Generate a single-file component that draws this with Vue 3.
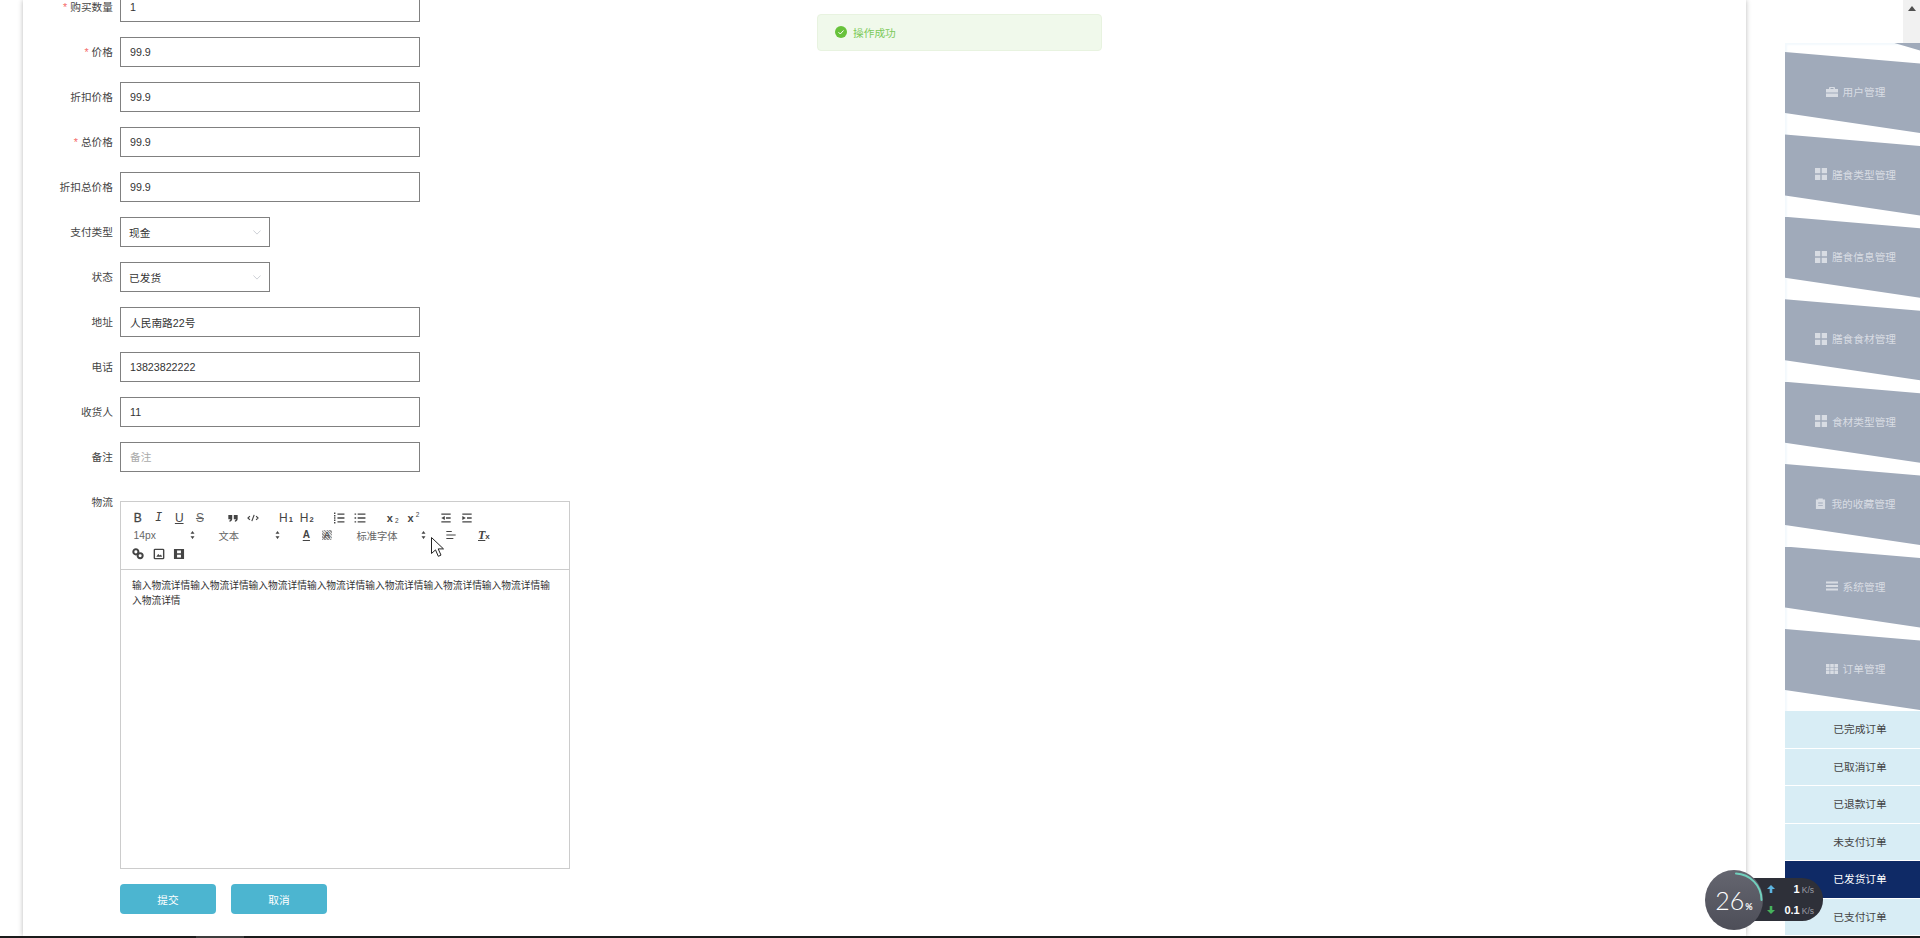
<script setup>
const fields = [
  { label: '购买数量', req: true, value: '1' },
  { label: '价格', req: true, value: '99.9' },
  { label: '折扣价格', value: '99.9' },
  { label: '总价格', req: true, value: '99.9' },
  { label: '折扣总价格', value: '99.9' },
  { label: '支付类型', value: '现金', select: true },
  { label: '状态', value: '已发货', select: true },
  { label: '地址', value: '人民南路22号' },
  { label: '电话', value: '13823822222' },
  { label: '收货人', value: '11' },
  { label: '备注', placeholder: '备注' },
]

const icons = {
  quote: '<g fill="currentColor" stroke="none"><path d="M3 5h5v5c0 2.200-1.400 3.600-3.600 3.800v-1.600c.8-.2 1.300-.8 1.400-1.700H3z"/><path d="M10 5h5v5c0 2.200-1.400 3.600-3.600 3.800v-1.600c.8-.2 1.300-.8 1.400-1.700H10z"/></g>',
  code: '<path d="M5 6.500 2.500 9 5 11.500M13 6.500 15.500 9 13 11.500M10.500 5 7.500 13"/>',
  ol: '<path d="M7 4h9M7 9h9M7 14h9" stroke-width="1.800"/><path d="M3.500 2v14" stroke-width="1.800" stroke-dasharray="2 1"/>',
  ul: '<path d="M6 4h10M6 9h10M6 14h10M2 4h2M2 9h2M2 14h2" stroke-width="1.800"/>',
  outdent: '<path d="M3 4h12M9 9h6M3 14h12" stroke-width="1.800"/><path d="M7.500 6.500v5L3 9z" fill="currentColor" stroke="none"/>',
  indent: '<path d="M3 4h12M9 9h6M3 14h12" stroke-width="1.800"/><path d="M3 6.500v5L7.500 9z" fill="currentColor" stroke="none"/>',
  align: '<path d="M3 4.500h7M3 9h12M3 13.500h9" stroke-width="1.600"/>',
  link: '<g stroke-width="2.600"><rect x="3" y="3" width="6.500" height="6.500" rx="3.200"/><rect x="8.500" y="8" width="6.500" height="6.500" rx="3.200"/></g>',
  image: '<rect x="3" y="3" width="12" height="12" rx="1" stroke-width="1.800"/><path d="M5.500 12.500 8 9l2 2 1.500-1.500 1.500 3z" fill="currentColor" stroke="none"/>',
  video: '<path d="M3 2.500h12a.5.5 0 0 1 .5.5v12a.5.5 0 0 1-.5.5H3a.5.5 0 0 1-.5-.5V3a.5.5 0 0 1 .5-.5zM6.500 4.500v3.500h5V4.500zm0 5.500v3.500h5V10z" fill="currentColor" fill-rule="evenodd" stroke="none"/>',
}

const groups1 = [
  [{ text: 'B', cls: 'bold' }, { text: 'I', cls: 'ital' }, { text: 'U', cls: 'under' }, { text: 'S', cls: 'strike' }],
  [{ icon: 'quote' }, { icon: 'code' }],
  [{ text: 'H', sub: '1', cls: 'head' }, { text: 'H', sub: '2', cls: 'head' }],
  [{ icon: 'ol' }, { icon: 'ul' }],
  [{ text: 'x', sub: '2', cls: 'script' }, { text: 'x', sup: '2', cls: 'script' }],
  [{ icon: 'outdent' }, { icon: 'indent' }],
]

const navs = [
  { text: '', icon: 'none', clip: true },
  { text: '用户管理', icon: 'case' },
  { text: '膳食类型管理', icon: 'large' },
  { text: '膳食信息管理', icon: 'large' },
  { text: '膳食食材管理', icon: 'large' },
  { text: '食材类型管理', icon: 'large' },
  { text: '我的收藏管理', icon: 'clip' },
  { text: '系统管理', icon: 'bars' },
  { text: '订单管理', icon: 'grid' },
]
const subs = ['已完成订单', '已取消订单', '已退款订单', '未支付订单', '已发货订单', '已支付订单']
const memo = '输入物流详情'.repeat(8)
</script>

<template>
  <div class="page">
    <div class="body">
      <main class="card">
        <form class="form" @submit.prevent>
          <div v-for="f in fields" :key="f.label" class="row">
            <label class="label"><i v-if="f.req" class="req">*</i>{{ f.label }}</label>
            <div v-if="f.select" class="select">
              <span>{{ f.value }}</span>
              <svg class="chev" viewBox="0 0 10 6" width="8" height="5"><path d="M.5.5 5 5 9.500.5" fill="none" stroke="#c0c4cc" /></svg>
            </div>
            <input v-else class="input" :value="f.value" :placeholder="f.placeholder" />
          </div>

          <div class="row editor-row">
            <label class="label">物流</label>
            <div class="editor">
              <div class="toolbar">
                <div class="tool-row first">
                  <div v-for="(g, i) in groups1" :key="i" class="group">
                    <span v-for="(b, j) in g" :key="j" class="tbtn" :class="b.cls">
                      <svg v-if="b.icon" viewBox="0 0 18 18" width="14" height="14" fill="none" stroke="currentColor" stroke-width="1.500" v-html="icons[b.icon]"></svg>
                      <template v-else>{{ b.text }}<sub v-if="b.sub">{{ b.sub }}</sub><sup v-if="b.sup">{{ b.sup }}</sup></template>
                    </span>
                  </div>
                </div>
                <div class="tool-row">
                  <div class="picker size">14px<svg class="updown" viewBox="0 0 6 10" width="5" height="8"><path d="M3 0l2.500 3.500h-5zM3 10 .5 6.500h5z" fill="#444" /></svg></div>
                  <div class="picker type">文本<svg class="updown" viewBox="0 0 6 10" width="5" height="8"><path d="M3 0l2.500 3.500h-5zM3 10 .5 6.500h5z" fill="#444" /></svg></div>
                  <div class="group color">
                    <span class="tbtn swatch">A</span>
                    <span class="tbtn"><b class="hatch">A</b></span>
                  </div>
                  <div class="picker font">标准字体<svg class="updown" viewBox="0 0 6 10" width="5" height="8"><path d="M3 0l2.500 3.500h-5zM3 10 .5 6.500h5z" fill="#444" /></svg></div>
                  <div class="group align"><span class="tbtn"><svg viewBox="0 0 18 18" width="14" height="14" fill="none" stroke="currentColor" stroke-width="1.500" v-html="icons.align"></svg></span></div>
                  <div class="group clean"><span class="tbtn tx"><u>T</u><sub>x</sub></span></div>
                </div>
                <div class="tool-row last">
                  <div class="group">
                    <span v-for="n in ['link', 'image', 'video']" :key="n" class="tbtn">
                      <svg viewBox="0 0 18 18" width="14" height="14" fill="none" stroke="currentColor" stroke-width="1.500" v-html="icons[n]"></svg>
                    </span>
                  </div>
                </div>
              </div>
              <div class="content">{{ memo }}</div>
            </div>
          </div>

          <div class="actions">
            <button class="btn" type="button">提交</button>
            <button class="btn" type="button">取消</button>
          </div>
        </form>
      </main>

      <aside class="side">
        <div class="side-top">
          <div class="scroll">
            <svg viewBox="0 0 8 5" width="8" height="5"><path d="M4 0l4 5H0z" fill="#505050" /></svg>
          </div>
        </div>
        <nav class="nav">
          <div class="menu">
            <div v-for="(n, i) in navs" :key="i" class="menu-item" :class="{ ghost: n.clip }">
              <svg v-if="n.icon === 'case'" viewBox="0 0 12 12" width="12" height="12"><path d="M4 1h4a1 1 0 0 1 1 1v1h3v3.500H0V3h3V2a1 1 0 0 1 1-1zm.5 1v1h3V2zM0 7.500h12V11H0z" fill="currentColor" fill-rule="evenodd" /></svg>
              <svg v-else-if="n.icon === 'large'" viewBox="0 0 12 12" width="12" height="12"><path d="M0 0h5.300v5.300H0zM6.700 0H12v5.300H6.700zM0 6.700h5.300V12H0zM6.700 6.700H12V12H6.700z" fill="currentColor" /></svg>
              <svg v-else-if="n.icon === 'clip'" viewBox="0 0 12 12" width="11" height="13"><path d="M1 1.500h2.500V.5h5v1H11V12H1zM3.500 5v1h5V5zm0 2.500v1h5v-1z" fill="currentColor" fill-rule="evenodd" /></svg>
              <svg v-else-if="n.icon === 'bars'" viewBox="0 0 12 12" width="12" height="12"><path d="M0 1.500h12v2H0zM0 5h12v2H0zM0 8.500h12v2H0z" fill="currentColor" /></svg>
              <svg v-else-if="n.icon === 'grid'" viewBox="0 0 12 12" width="12" height="12"><path d="M0 1h3.500v3H0zM4.250 1h3.500v3h-3.500zM8.500 1H12v3H8.500zM0 4.500h3.500v3H0zM4.250 4.500h3.500v3h-3.500zM8.500 4.500H12v3H8.500zM0 8h3.500v3H0zM4.250 8h3.500v3h-3.500zM8.500 8H12v3H8.500z" fill="currentColor" /></svg>
              <span v-if="n.text">{{ n.text }}</span>
            </div>
          </div>
          <ul class="subs">
            <li v-for="s in subs" :key="s" :class="{ active: s === '已发货订单' }">{{ s }}</li>
          </ul>
        </nav>
      </aside>
    </div>
    <div class="taskbar"><span class="task"></span></div>

    <div class="toast">
      <svg viewBox="0 0 12 12" width="12" height="12"><circle cx="6" cy="6" r="6" fill="#67c23a" /><path d="M3.500 6.200 5.300 8l3.200-3.500" fill="none" stroke="#fff" stroke-width="1" /></svg>
      <span>操作成功</span>
    </div>

    <svg class="cursor" viewBox="0 0 13 20" width="13" height="20"><path d="M.5.5v16l4-3.600 2.800 6.400 2.700-1.200-2.800-6.200h5.300z" fill="#fff" stroke="#222" stroke-width="1" /></svg>

    <div class="meter">
      <div class="pill">
        <div class="rate"><svg viewBox="0 0 8 8" width="8" height="8"><path d="M4 0l4 4H5.300v4H2.700V4H0z" fill="#5db4e0" /></svg><b>1</b><small>K/s</small></div>
        <div class="rate"><svg viewBox="0 0 8 8" width="8" height="8"><path d="M4 8 0 4h2.700V0h2.600v4H8z" fill="#46b35c" /></svg><b>0.1</b><small>K/s</small></div>
      </div>
      <div class="dial">
        <svg class="arc" viewBox="0 0 60 60" width="60" height="60"><path d="M31 3.500A26.500 26.500 0 0 1 56.500 30" fill="none" stroke="#70d0bd" stroke-width="2" stroke-linecap="round" /></svg>
        <span class="num">26</span><span class="pct">%</span>
      </div>
    </div>
  </div>
</template>

<style>
html, body { margin: 0; background: #fff; overflow: hidden; }
</style>

<style scoped>
.page {
  height: 938px;
  display: flex;
  flex-direction: column;
  overflow: hidden;
  position: relative;
  background: #fff;
  font-family: "Liberation Sans", "Noto Sans CJK SC", sans-serif;
  font-size: 10.7px;
  color: #444;
}
.body { flex: 1; min-height: 0; display: flex; }
.card {
  width: 1723px;
  margin-left: 23px;
  flex: none;
  overflow: hidden;
  background: #fff;
  box-shadow: 0 0 5px rgba(0, 0, 0, .28);
}
.form { margin-top: -8px; }
.row { display: flex; align-items: center; margin-bottom: 15px; }
.label { width: 90px; margin-right: 7px; text-align: right; flex: none; position: relative; top: -1px; }
.req { font-style: normal; color: #f56c6c; margin-right: 3px; }
.input, .select {
  box-sizing: border-box;
  height: 30px;
  border: 1px solid #808080;
  background: #fff;
  font: inherit;
  color: #333;
}
.input { width: 300px; padding: 0 9px; outline: none; }
.input::placeholder { color: #aaa; }
.select {
  width: 150px;
  padding: 0 8px;
  display: flex;
  align-items: center;
  justify-content: space-between;
}
.editor-row { align-items: flex-start; padding-top: 8px; margin-bottom: 0; }
.editor-row .label { line-height: 14px; top: 0; }
.editor {
  box-sizing: border-box;
  width: 450px;
  height: 368px;
  margin-top: 6px;
  border: 1px solid #ccc;
}
.toolbar {
  box-sizing: border-box;
  height: 68px;
  padding: 7px 0 0 6.5px;
  border-bottom: 1px solid #ccc;
  color: #444;
}
.tool-row { display: flex; height: 18px; align-items: center; }
.tool-row.first { height: 17px; }
.tool-row.last { height: 19px; }
.group { display: flex; margin-right: 12px; }
.tbtn {
  width: 20.7px;
  height: 18px;
  display: flex;
  align-items: center;
  justify-content: center;
  font-size: 11.500px;
  line-height: 18px;
}
.tbtn sub, .tbtn sup { font-size: 6.500px; line-height: 0; margin-left: 1px; }
.bold { font-size: 12px; -webkit-text-stroke: .3px #444; }
.ital { font-family: "Liberation Mono", monospace; font-style: italic; font-size: 12px; }
.under { text-decoration: underline; font-size: 12px; }
.strike { text-decoration: line-through; font-size: 12px; color: #666; }
.head { font-size: 12px; }
.head sub { font-weight: 700; font-size: 7.500px; position: relative; top: 2px; }
.script { font-weight: 700; font-size: 11px; }
.script sub { position: relative; top: 3px; margin-left: 2px; font-weight: 400; }
.script sup { position: relative; top: -3px; margin-left: 2px; font-weight: 400; }
.picker {
  box-sizing: border-box;
  display: flex;
  align-items: center;
  justify-content: space-between;
  height: 18px;
  padding: 0 3px 0 6px;
  font-size: 10.300px;
  color: #666;
}
.size { width: 70px; margin-right: 15px; }
.type { width: 70px; margin-right: 13.500px; }
.font { width: 79px; margin: 0 11.500px 0 1px; }
.swatch { font-weight: 700; font-size: 10px; text-decoration: underline; text-underline-offset: 2px; }
.hatch {
  width: 10px;
  height: 10px;
  display: block;
  font-size: 9px;
  line-height: 10px;
  text-align: center;
  color: #555;
  background: repeating-linear-gradient(45deg, #999 0 1px, #ddd 1px 2px);
}
.tx { font-family: "Liberation Serif", serif; font-style: italic; font-size: 12px; font-weight: 700; }
.tx sub { font-family: "Liberation Sans", sans-serif; font-style: normal; font-size: 8px; position: relative; top: 2px; margin: 0; }
.content {
  padding: 9px 15px 0 11px;
  font-size: 9.720px;
  line-height: 14.500px;
  color: #333;
}
.actions { display: flex; gap: 15px; margin: 15px 0 0 97px; }
.btn {
  width: 96px;
  height: 30px;
  padding: 0;
  border: 0;
  border-radius: 4px;
  background: #4cb5d0;
  color: #fff;
  font: inherit;
}
.side { flex: 1; min-width: 0; display: flex; flex-direction: column; }
.side-top { height: 43px; flex: none; display: flex; justify-content: flex-end; }
.scroll {
  width: 17px;
  background: #f1f1f1;
  display: flex;
  justify-content: center;
  padding-top: 6px;
  box-sizing: border-box;
}
.scroll svg { display: block; }
.nav {
  flex: 1;
  min-height: 0;
  margin-left: 39px;
  overflow: hidden;
  box-shadow: inset 2px 2px 2px #f3f9fd;
}
.menu { padding-top: 9px; }
.menu-item {
  height: 82.430px;
  display: flex;
  align-items: center;
  justify-content: center;
  gap: 5px;
  padding: 0 0 3px 6px;
  box-sizing: border-box;
  background: #a0aaba;
  color: #d8dce3;
  clip-path: polygon(0 0, 100% 11.500px, 100% 81px, 0 61px);
}
.ghost { margin-top: -82.430px; clip-path: polygon(0 0, 100% 11.500px, 100% 81px, 60% 65px, 0 49px); }
.subs { list-style: none; margin: -.3px 0 0; padding: 0; }
.subs li {
  height: 36.500px;
  line-height: 36.500px;
  padding-left: 15px;
  text-align: center;
  background: #d8edf5;
  border-bottom: 1px solid #fff;
}
.subs li.active { background: #0f2a66; color: #fff; }
.taskbar { height: 2px; flex: none; background: #1b1b1b; padding-left: 196px; }
.task { display: block; width: 48px; height: 2px; background: #3d3d3d; }
.toast {
  position: absolute;
  left: 817px;
  top: 14px;
  box-sizing: border-box;
  width: 285px;
  height: 37px;
  padding: 0 0 1px 17px;
  display: flex;
  align-items: center;
  gap: 6px;
  background: #f0f9eb;
  border: 1px solid #e8f3e0;
  border-radius: 4px;
  color: #7cc95a;
}
.cursor { position: absolute; left: 431px; top: 537px; }
.meter { position: absolute; left: 1705px; top: 870px; width: 120px; height: 60px; }
.dial {
  position: absolute;
  left: 0;
  top: 0;
  width: 58px;
  height: 60px;
  border-radius: 50%;
  background: linear-gradient(#656670, #4d4e58);
  color: #fff;
  display: flex;
  align-items: baseline;
  justify-content: center;
  line-height: 60px;
}
.arc { position: absolute; left: 0; top: 0; }
.num { font-family: Lato, sans-serif; font-weight: 300; font-size: 25px; }
.pct { font-family: Lato, sans-serif; font-size: 9px; font-weight: 700; margin-left: 1px; }
.pill {
  position: absolute;
  left: 30px;
  top: 8px;
  box-sizing: border-box;
  width: 88px;
  height: 43px;
  padding-left: 32px;
  border-radius: 0 21px 21px 0;
  background: #2e3039;
  display: flex;
  flex-direction: column;
  justify-content: space-around;
}
.rate { display: flex; align-items: baseline; color: #fff; padding-right: 9px; }
.rate svg { align-self: center; }
.rate b { margin-left: auto; font-size: 11px; font-weight: 700; }
.rate small { margin-left: 2px; font-size: 8.500px; color: #9a9ca5; }
</style>
